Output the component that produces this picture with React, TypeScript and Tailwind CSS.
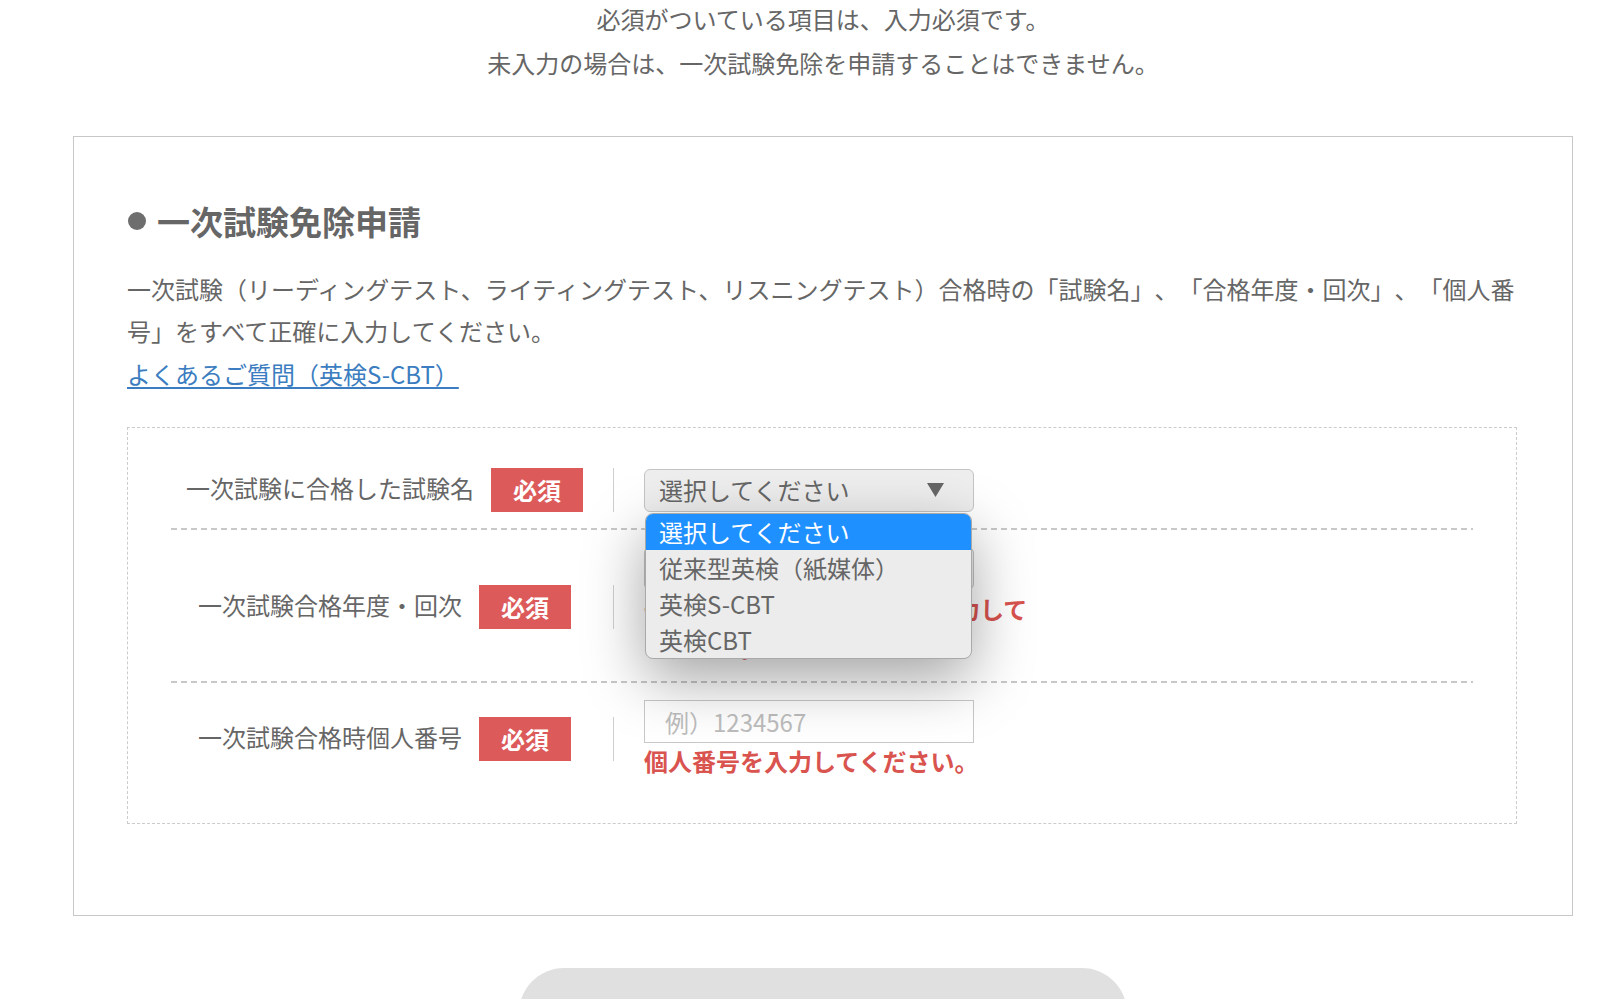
import React from "react";

const Badge = () => (
  <span className="flex h-[44px] w-[92px] shrink-0 items-center justify-center bg-[#dc5a5a] text-[24px] font-bold leading-none text-white">
    必須
  </span>
);

function Label({ text }: { text: string }) {
  return (
    <div className="flex w-[427px] shrink-0 items-center justify-center gap-[17px]">
      <span className="relative -top-[2px] whitespace-nowrap text-[24px] leading-[44px] text-[#666666]">{text}</span>
      <Badge />
    </div>
  );
}

const Divider = () => <div className="ml-[15px] mr-[30px] h-[44px] w-px shrink-0 bg-[#cfcfcf]" />;

const Arrow = () => (
  <svg width="17" height="14" viewBox="0 0 17 14" aria-hidden="true">
    <path d="M0 0H17L8.5 14Z" fill="#666666" />
  </svg>
);

function FakeSelect() {
  return (
    <div className="flex h-[43px] w-[330px] items-center justify-between rounded-[6px] border border-[#c4c4c4] bg-[#eeeeee] pl-[14px] pr-[29px] text-[24px] text-[#666666]">
      <span className="leading-none">選択してください</span>
      <Arrow />
    </div>
  );
}

const RowSep = () => (
  <div className="h-[2px] bg-[image:repeating-linear-gradient(to_right,#c8c8c8_0_6px,transparent_6px_10px)]" />
);

const options = ["選択してください", "従来型英検（紙媒体）", "英検S-CBT", "英検CBT"];

export default function App() {
  return (
    <div className="min-h-screen bg-white font-['Noto_Sans_CJK_JP','Noto_Sans',sans-serif] text-[#666666] [text-spacing-trim:space-all]">
      <div className="ml-[73px] w-[1500px]">
        <div className="-mt-[3px] text-center text-[24px] leading-[44px]">
          <p>必須がついている項目は、入力必須です。</p>
          <p>未入力の場合は、一次試験免除を申請することはできません。</p>
        </div>

        <section className="mt-[51px] border border-[#c8c8c8] pb-[91px] pl-[53px] pr-[53px] pt-[62px]">
          <h2 className="flex items-center text-[33px] font-bold leading-[44px] text-[#666666]">
            <span className="ml-px mr-[11px] h-[18px] w-[18px] rounded-full bg-[#6e6e6e]" />
            一次試験免除申請
          </h2>
          <p className="mt-[25px] text-[24px] leading-[42px]">
            一次試験（リーディングテスト、ライティングテスト、リスニングテスト）合格時の「試験名」、「合格年度・回次」、「個人番号」をすべて正確に入力してください。
          </p>
          <div className="text-[24px] leading-[44px]">
            <a href="#" className="text-[#3b7dc0] underline underline-offset-[3px]">
              よくあるご質問（英検S-CBT）
            </a>
          </div>

          <div className="mr-[2px] mt-[31px] border border-dashed border-[#cccccc] px-[43px] pb-[27px] pt-[23px]">
            {/* Row 1 */}
            <div className="flex items-center pb-[16px] pt-[17px]">
              <Label text="一次試験に合格した試験名" />
              <Divider />
              <div className="relative w-[400px]">
                <FakeSelect />
                <div className="absolute left-[1px] top-[44px] z-10 w-[327px] overflow-hidden rounded-[8px] border border-[#a9a9a9] bg-[#ececec] shadow-[0_20px_60px_rgba(0,0,0,0.36)]">
                  {options.map((o, i) => (
                    <div
                      key={o}
                      className={
                        i === 0
                          ? "h-[36px] bg-[#1e90ff] pl-[13px] text-[24px] leading-[36px] text-white"
                          : "h-[36px] pl-[13px] text-[24px] leading-[36px] text-[#666666]"
                      }
                    >
                      {o}
                    </div>
                  ))}
                </div>
              </div>
            </div>
            <RowSep />

            {/* Row 2 */}
            <div className="flex items-center pb-[15px] pt-[17px]">
              <Label text="一次試験合格年度・回次" />
              <Divider />
              <div className="w-[400px]">
                <FakeSelect />
                <p className="text-[24px] font-bold leading-[38px] text-[#d9534f]">
                  一次試験合格年度・回次を入力してください。
                </p>
              </div>
            </div>
            <RowSep />

            {/* Row 3 */}
            <div className="flex items-center py-[17px]">
              <Label text="一次試験合格時個人番号" />
              <Divider />
              <div className="w-[400px]">
                <input
                  readOnly
                  placeholder="例）1234567"
                  className="block h-[43px] w-[330px] border border-[#c8c8c8] bg-white pl-[20px] text-[24px] text-[#666666] outline-none placeholder:text-[#bdbdbd]"
                />
                <p className="text-[24px] font-bold leading-[35.5px] text-[#d9534f]">
                  個人番号を入力してください。
                </p>
              </div>
            </div>
          </div>
        </section>

        <div className="mx-auto mt-[52px] h-[90px] w-[608px] rounded-[45px] bg-[#e0e0e0]" />
      </div>
    </div>
  );
}
